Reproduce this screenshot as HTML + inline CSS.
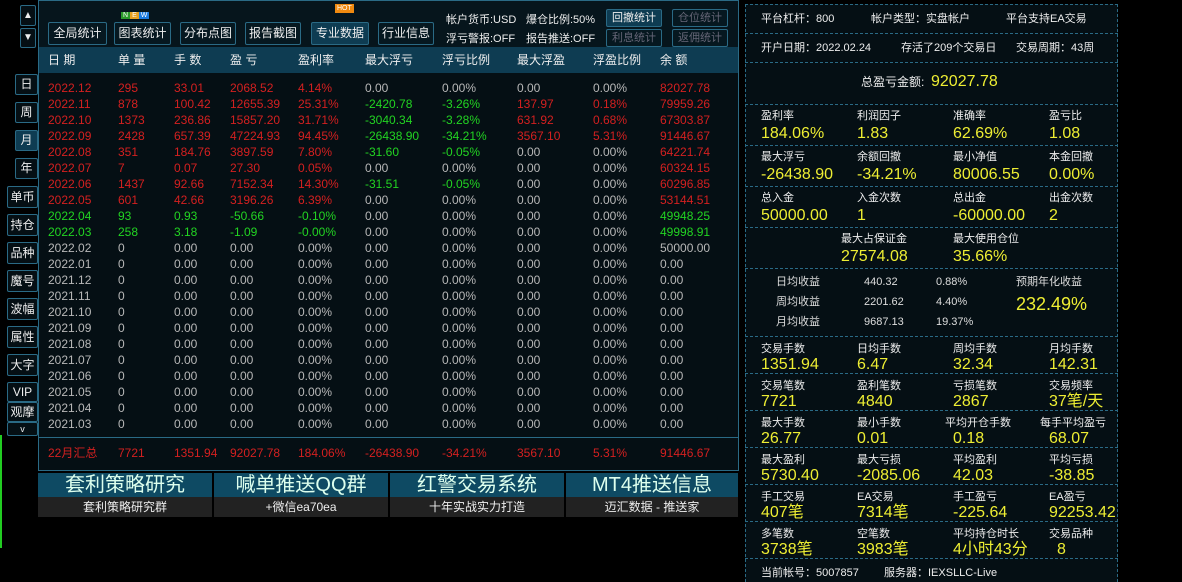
<!DOCTYPE html><html><head><meta charset="utf-8"><style>
*{margin:0;padding:0;box-sizing:border-box}
body{width:1182px;height:582px;background:#000;position:relative;overflow:hidden;font-family:"Liberation Sans","Noto Sans CJK SC",sans-serif;color:#ddd}
.a{position:absolute;white-space:nowrap}
.btn{position:absolute;border:1px solid #2a6a85;background:#061820;color:#eee;font-size:12px;text-align:center;border-radius:2px;white-space:nowrap}
.sb{position:absolute;border:1px solid #2a6a85;background:#050f14;color:#eee;font-size:12px;text-align:center;border-radius:2px;white-space:nowrap}
.row{position:absolute;left:0;width:740px;height:16px;font-size:12px;line-height:16px;white-space:nowrap}
.row span{position:absolute;top:0;white-space:nowrap}
.r{color:#d42020}.g{color:#22d422}.z{color:#b8b8b8}
.c1{left:48px}.c2{left:118px}.c3{left:174px}.c4{left:230px}.c5{left:298px}.c6{left:365px}.c7{left:442px}.c8{left:517px}.c9{left:593px}.c10{left:660px}
.rp{position:absolute;left:745px;width:373px;border-bottom:1px dashed #2a6a85}
.lb{position:absolute;font-size:11px;line-height:14px;color:#eee;white-space:nowrap}
.vl{position:absolute;font-size:16px;line-height:19px;height:19px;color:#eeee33;white-space:nowrap}
.sm{position:absolute;font-size:11px;line-height:14px;color:#ddd;white-space:nowrap}
</style></head><body>
<div class="sb" style="left:20px;top:5px;width:16px;height:21px;font-size:10px;line-height:19px">▲</div>
<div class="sb" style="left:20px;top:28px;width:16px;height:20px;font-size:10px;line-height:18px">▼</div>
<div class="sb" style="left:15px;top:74px;width:23px;height:21px;line-height:19px">日</div>
<div class="sb" style="left:15px;top:102px;width:23px;height:21px;line-height:19px">周</div>
<div class="sb" style="left:15px;top:130px;width:23px;height:21px;line-height:19px;background:#0e3c52">月</div>
<div class="sb" style="left:15px;top:158px;width:23px;height:21px;line-height:19px">年</div>
<div class="sb" style="left:7px;top:186px;width:31px;height:22px;line-height:20px">单币</div>
<div class="sb" style="left:7px;top:214px;width:31px;height:22px;line-height:20px">持仓</div>
<div class="sb" style="left:7px;top:242px;width:31px;height:22px;line-height:20px">品种</div>
<div class="sb" style="left:7px;top:270px;width:31px;height:22px;line-height:20px">魔号</div>
<div class="sb" style="left:7px;top:298px;width:31px;height:22px;line-height:20px">波幅</div>
<div class="sb" style="left:7px;top:326px;width:31px;height:22px;line-height:20px">属性</div>
<div class="sb" style="left:7px;top:354px;width:31px;height:22px;line-height:20px">大字</div>
<div class="sb" style="left:7px;top:382px;width:31px;height:20px;line-height:18px">VIP</div>
<div class="sb" style="left:7px;top:402px;width:31px;height:20px;line-height:18px">观摩</div>
<div class="sb" style="left:7px;top:422px;width:31px;height:14px;line-height:12px;font-size:9px">v</div>
<div class="a" style="left:0;top:435px;width:2px;height:113px;background:#22cc22"></div>
<div class="a" style="left:38px;top:0;width:701px;height:471px;border:1px solid #2a6a85;background:#050f14"></div>
<div class="a" style="left:39px;top:1px;width:699px;height:46px;background:#06151c"></div>
<div class="btn" style="left:48px;top:22px;width:59px;height:23px;line-height:21px">全局统计</div>
<div class="btn" style="left:114px;top:22px;width:57px;height:23px;line-height:21px">图表统计</div>
<div class="a" style="left:121px;top:12px;font-size:7px;line-height:8px"><span style="background:#2a9a2a;color:#fff;padding:0 2px">N</span><span style="background:#e8a020;color:#fff;padding:0 2px">E</span><span style="background:#1a7ae0;color:#fff;padding:0 2px">W</span></div>
<div class="btn" style="left:180px;top:22px;width:56px;height:23px;line-height:21px">分布点图</div>
<div class="btn" style="left:245px;top:22px;width:56px;height:23px;line-height:21px">报告截图</div>
<div class="btn" style="left:311px;top:22px;width:58px;height:23px;line-height:21px;background:#0e3c52">专业数据</div>
<div class="a" style="left:335px;top:4px;background:#f08a10;color:#fff;font-size:7px;padding:0 2px;line-height:9px">HOT</div>
<div class="btn" style="left:378px;top:22px;width:56px;height:23px;line-height:21px">行业信息</div>
<div class="a" style="left:446px;top:11px;font-size:11px;color:#eee">帐户货币:USD</div>
<div class="a" style="left:526px;top:11px;font-size:11px;color:#eee">爆仓比例:50%</div>
<div class="a" style="left:446px;top:30px;font-size:11px;color:#eee">浮亏警报:OFF</div>
<div class="a" style="left:526px;top:30px;font-size:11px;color:#eee">报告推送:OFF</div>
<div class="btn" style="left:606px;top:9px;width:56px;height:18px;line-height:16px;font-size:11px;background:#0e3c52">回撤统计</div>
<div class="btn" style="left:672px;top:9px;width:56px;height:18px;line-height:16px;font-size:11px;color:#667">仓位统计</div>
<div class="btn" style="left:606px;top:29px;width:56px;height:18px;line-height:16px;font-size:11px;color:#667">利息统计</div>
<div class="btn" style="left:672px;top:29px;width:56px;height:18px;line-height:16px;font-size:11px;color:#667">返佣统计</div>
<div class="a" style="left:39px;top:47px;width:699px;height:26px;background:#0e3c52"></div>
<div class="row" style="top:52px;color:#eee"><span class="c1">日 期</span><span class="c2">单 量</span><span class="c3">手 数</span><span class="c4">盈 亏</span><span class="c5">盈利率</span><span class="c6">最大浮亏</span><span class="c7">浮亏比例</span><span class="c8">最大浮盈</span><span class="c9">浮盈比例</span><span class="c10">余 额</span></div>

<div class="row r" style="top:80px"><span class="c1">2022.12</span><span class="c2">295</span><span class="c3">33.01</span><span class="c4">2068.52</span><span class="c5">4.14%</span><span class="c6 z">0.00</span><span class="c7 z">0.00%</span><span class="c8 z">0.00</span><span class="c9 z">0.00%</span><span class="c10">82027.78</span></div>
<div class="row r" style="top:96px"><span class="c1">2022.11</span><span class="c2">878</span><span class="c3">100.42</span><span class="c4">12655.39</span><span class="c5">25.31%</span><span class="c6 g">-2420.78</span><span class="c7 g">-3.26%</span><span class="c8">137.97</span><span class="c9">0.18%</span><span class="c10">79959.26</span></div>
<div class="row r" style="top:112px"><span class="c1">2022.10</span><span class="c2">1373</span><span class="c3">236.86</span><span class="c4">15857.20</span><span class="c5">31.71%</span><span class="c6 g">-3040.34</span><span class="c7 g">-3.28%</span><span class="c8">631.92</span><span class="c9">0.68%</span><span class="c10">67303.87</span></div>
<div class="row r" style="top:128px"><span class="c1">2022.09</span><span class="c2">2428</span><span class="c3">657.39</span><span class="c4">47224.93</span><span class="c5">94.45%</span><span class="c6 g">-26438.90</span><span class="c7 g">-34.21%</span><span class="c8">3567.10</span><span class="c9">5.31%</span><span class="c10">91446.67</span></div>
<div class="row r" style="top:144px"><span class="c1">2022.08</span><span class="c2">351</span><span class="c3">184.76</span><span class="c4">3897.59</span><span class="c5">7.80%</span><span class="c6 g">-31.60</span><span class="c7 g">-0.05%</span><span class="c8 z">0.00</span><span class="c9 z">0.00%</span><span class="c10">64221.74</span></div>
<div class="row r" style="top:160px"><span class="c1">2022.07</span><span class="c2">7</span><span class="c3">0.07</span><span class="c4">27.30</span><span class="c5">0.05%</span><span class="c6 z">0.00</span><span class="c7 z">0.00%</span><span class="c8 z">0.00</span><span class="c9 z">0.00%</span><span class="c10">60324.15</span></div>
<div class="row r" style="top:176px"><span class="c1">2022.06</span><span class="c2">1437</span><span class="c3">92.66</span><span class="c4">7152.34</span><span class="c5">14.30%</span><span class="c6 g">-31.51</span><span class="c7 g">-0.05%</span><span class="c8 z">0.00</span><span class="c9 z">0.00%</span><span class="c10">60296.85</span></div>
<div class="row r" style="top:192px"><span class="c1">2022.05</span><span class="c2">601</span><span class="c3">42.66</span><span class="c4">3196.26</span><span class="c5">6.39%</span><span class="c6 z">0.00</span><span class="c7 z">0.00%</span><span class="c8 z">0.00</span><span class="c9 z">0.00%</span><span class="c10">53144.51</span></div>
<div class="row g" style="top:208px"><span class="c1">2022.04</span><span class="c2">93</span><span class="c3">0.93</span><span class="c4">-50.66</span><span class="c5">-0.10%</span><span class="c6 z">0.00</span><span class="c7 z">0.00%</span><span class="c8 z">0.00</span><span class="c9 z">0.00%</span><span class="c10">49948.25</span></div>
<div class="row g" style="top:224px"><span class="c1">2022.03</span><span class="c2">258</span><span class="c3">3.18</span><span class="c4">-1.09</span><span class="c5">-0.00%</span><span class="c6 z">0.00</span><span class="c7 z">0.00%</span><span class="c8 z">0.00</span><span class="c9 z">0.00%</span><span class="c10">49998.91</span></div>
<div class="row z" style="top:240px"><span class="c1">2022.02</span><span class="c2">0</span><span class="c3">0.00</span><span class="c4">0.00</span><span class="c5">0.00%</span><span class="c6">0.00</span><span class="c7">0.00%</span><span class="c8">0.00</span><span class="c9">0.00%</span><span class="c10">50000.00</span></div>
<div class="row z" style="top:256px"><span class="c1">2022.01</span><span class="c2">0</span><span class="c3">0.00</span><span class="c4">0.00</span><span class="c5">0.00%</span><span class="c6">0.00</span><span class="c7">0.00%</span><span class="c8">0.00</span><span class="c9">0.00%</span><span class="c10">0.00</span></div>
<div class="row z" style="top:272px"><span class="c1">2021.12</span><span class="c2">0</span><span class="c3">0.00</span><span class="c4">0.00</span><span class="c5">0.00%</span><span class="c6">0.00</span><span class="c7">0.00%</span><span class="c8">0.00</span><span class="c9">0.00%</span><span class="c10">0.00</span></div>
<div class="row z" style="top:288px"><span class="c1">2021.11</span><span class="c2">0</span><span class="c3">0.00</span><span class="c4">0.00</span><span class="c5">0.00%</span><span class="c6">0.00</span><span class="c7">0.00%</span><span class="c8">0.00</span><span class="c9">0.00%</span><span class="c10">0.00</span></div>
<div class="row z" style="top:304px"><span class="c1">2021.10</span><span class="c2">0</span><span class="c3">0.00</span><span class="c4">0.00</span><span class="c5">0.00%</span><span class="c6">0.00</span><span class="c7">0.00%</span><span class="c8">0.00</span><span class="c9">0.00%</span><span class="c10">0.00</span></div>
<div class="row z" style="top:320px"><span class="c1">2021.09</span><span class="c2">0</span><span class="c3">0.00</span><span class="c4">0.00</span><span class="c5">0.00%</span><span class="c6">0.00</span><span class="c7">0.00%</span><span class="c8">0.00</span><span class="c9">0.00%</span><span class="c10">0.00</span></div>
<div class="row z" style="top:336px"><span class="c1">2021.08</span><span class="c2">0</span><span class="c3">0.00</span><span class="c4">0.00</span><span class="c5">0.00%</span><span class="c6">0.00</span><span class="c7">0.00%</span><span class="c8">0.00</span><span class="c9">0.00%</span><span class="c10">0.00</span></div>
<div class="row z" style="top:352px"><span class="c1">2021.07</span><span class="c2">0</span><span class="c3">0.00</span><span class="c4">0.00</span><span class="c5">0.00%</span><span class="c6">0.00</span><span class="c7">0.00%</span><span class="c8">0.00</span><span class="c9">0.00%</span><span class="c10">0.00</span></div>
<div class="row z" style="top:368px"><span class="c1">2021.06</span><span class="c2">0</span><span class="c3">0.00</span><span class="c4">0.00</span><span class="c5">0.00%</span><span class="c6">0.00</span><span class="c7">0.00%</span><span class="c8">0.00</span><span class="c9">0.00%</span><span class="c10">0.00</span></div>
<div class="row z" style="top:384px"><span class="c1">2021.05</span><span class="c2">0</span><span class="c3">0.00</span><span class="c4">0.00</span><span class="c5">0.00%</span><span class="c6">0.00</span><span class="c7">0.00%</span><span class="c8">0.00</span><span class="c9">0.00%</span><span class="c10">0.00</span></div>
<div class="row z" style="top:400px"><span class="c1">2021.04</span><span class="c2">0</span><span class="c3">0.00</span><span class="c4">0.00</span><span class="c5">0.00%</span><span class="c6">0.00</span><span class="c7">0.00%</span><span class="c8">0.00</span><span class="c9">0.00%</span><span class="c10">0.00</span></div>
<div class="row z" style="top:416px"><span class="c1">2021.03</span><span class="c2">0</span><span class="c3">0.00</span><span class="c4">0.00</span><span class="c5">0.00%</span><span class="c6">0.00</span><span class="c7">0.00%</span><span class="c8">0.00</span><span class="c9">0.00%</span><span class="c10">0.00</span></div>
<div class="a" style="left:38px;top:437px;width:701px;height:1px;background:#2a6a85"></div>
<div class="row r" style="top:445px"><span class="c1">22月汇总</span><span class="c2">7721</span><span class="c3">1351.94</span><span class="c4">92027.78</span><span class="c5">184.06%</span><span class="c6">-26438.90</span><span class="c7">-34.21%</span><span class="c8">3567.10</span><span class="c9">5.31%</span><span class="c10">91446.67</span></div>
<div class="a" style="left:38px;top:473px;width:700px;height:44px">
<div class="a" style="left:0;top:0;width:174px;height:24px;background:#0e4a63;color:#dfe;font-size:20px;text-align:center;line-height:24px">套利策略研究</div>
<div class="a" style="left:0;top:24px;width:174px;height:20px;background:#222;color:#eee;font-size:12px;text-align:center;line-height:20px">套利策略研究群</div>
<div class="a" style="left:176px;top:0;width:174px;height:24px;background:#0e4a63;color:#dfe;font-size:20px;text-align:center;line-height:24px">喊单推送QQ群</div>
<div class="a" style="left:176px;top:24px;width:174px;height:20px;background:#222;color:#eee;font-size:12px;text-align:center;line-height:20px">+微信ea70ea</div>
<div class="a" style="left:352px;top:0;width:174px;height:24px;background:#0e4a63;color:#dfe;font-size:20px;text-align:center;line-height:24px">红警交易系统</div>
<div class="a" style="left:352px;top:24px;width:174px;height:20px;background:#222;color:#eee;font-size:12px;text-align:center;line-height:20px">十年实战实力打造</div>
<div class="a" style="left:528px;top:0;width:172px;height:24px;background:#0e4a63;color:#dfe;font-size:20px;text-align:center;line-height:24px">MT4推送信息</div>
<div class="a" style="left:528px;top:24px;width:172px;height:20px;background:#222;color:#eee;font-size:12px;text-align:center;line-height:20px">迈汇数据 - 推送家</div>
</div>
<div class="a" style="left:745px;top:4px;width:373px;height:578px;background:#050f14;border-left:1px dashed #2a6a85;border-right:1px dashed #2a6a85;border-top:1px dashed #2a6a85"></div>
<div class="rp" style="top:4px;height:30px"></div>
<div class="rp" style="top:34px;height:29px"></div>
<div class="rp" style="top:63px;height:42px"></div>
<div class="rp" style="top:105px;height:41px"></div>
<div class="rp" style="top:146px;height:41px"></div>
<div class="rp" style="top:187px;height:41px"></div>
<div class="rp" style="top:228px;height:41px"></div>
<div class="rp" style="top:269px;height:68px"></div>
<div class="rp" style="top:337px;height:37px"></div>
<div class="rp" style="top:374px;height:37px"></div>
<div class="rp" style="top:411px;height:37px"></div>
<div class="rp" style="top:448px;height:37px"></div>
<div class="rp" style="top:485px;height:37px"></div>
<div class="rp" style="top:522px;height:37px"></div>
<div class="lb" style="left:761px;top:12px">平台杠杆：800</div>
<div class="lb" style="left:871px;top:12px">帐户类型：实盘帐户</div>
<div class="lb" style="left:1006px;top:12px">平台支持EA交易</div>
<div class="lb" style="left:761px;top:41px">开户日期：2022.02.24</div>
<div class="lb" style="left:901px;top:41px">存活了209个交易日</div>
<div class="lb" style="left:1016px;top:41px">交易周期：43周</div>
<div class="lb" style="left:861px;top:75px;font-size:12px">总盈亏金额:</div>
<div class="vl" style="left:931px;top:72px">92027.78</div>

<div class="lb" style="left:761px;top:109px">盈利率</div><div class="vl" style="left:761px;top:124px">184.06%</div>
<div class="lb" style="left:857px;top:109px">利润因子</div><div class="vl" style="left:857px;top:124px">1.83</div>
<div class="lb" style="left:953px;top:109px">准确率</div><div class="vl" style="left:953px;top:124px">62.69%</div>
<div class="lb" style="left:1049px;top:109px">盈亏比</div><div class="vl" style="left:1049px;top:124px">1.08</div>

<div class="lb" style="left:761px;top:150px">最大浮亏</div><div class="vl" style="left:761px;top:165px">-26438.90</div>
<div class="lb" style="left:857px;top:150px">余额回撤</div><div class="vl" style="left:857px;top:165px">-34.21%</div>
<div class="lb" style="left:953px;top:150px">最小净值</div><div class="vl" style="left:953px;top:165px">80006.55</div>
<div class="lb" style="left:1049px;top:150px">本金回撤</div><div class="vl" style="left:1049px;top:165px">0.00%</div>

<div class="lb" style="left:761px;top:191px">总入金</div><div class="vl" style="left:761px;top:206px">50000.00</div>
<div class="lb" style="left:857px;top:191px">入金次数</div><div class="vl" style="left:857px;top:206px">1</div>
<div class="lb" style="left:953px;top:191px">总出金</div><div class="vl" style="left:953px;top:206px">-60000.00</div>
<div class="lb" style="left:1049px;top:191px">出金次数</div><div class="vl" style="left:1049px;top:206px">2</div>

<div class="lb" style="left:841px;top:232px">最大占保证金</div><div class="vl" style="left:841px;top:247px">27574.08</div>
<div class="lb" style="left:953px;top:232px">最大使用仓位</div><div class="vl" style="left:953px;top:247px">35.66%</div>

<div class="sm" style="left:776px;top:275px">日均收益</div><div class="sm" style="left:864px;top:275px">440.32</div><div class="sm" style="left:936px;top:275px">0.88%</div>
<div class="sm" style="left:776px;top:295px">周均收益</div><div class="sm" style="left:864px;top:295px">2201.62</div><div class="sm" style="left:936px;top:295px">4.40%</div>
<div class="sm" style="left:776px;top:315px">月均收益</div><div class="sm" style="left:864px;top:315px">9687.13</div><div class="sm" style="left:936px;top:315px">19.37%</div>
<div class="sm" style="left:1016px;top:275px">预期年化收益</div>
<div class="vl" style="left:1016px;top:293px;font-size:18px;line-height:22px;height:22px">232.49%</div>

<div class="lb" style="left:761px;top:342px">交易手数</div><div class="vl" style="left:761px;top:355px">1351.94</div>
<div class="lb" style="left:857px;top:342px">日均手数</div><div class="vl" style="left:857px;top:355px">6.47</div>
<div class="lb" style="left:953px;top:342px">周均手数</div><div class="vl" style="left:953px;top:355px">32.34</div>
<div class="lb" style="left:1049px;top:342px">月均手数</div><div class="vl" style="left:1049px;top:355px">142.31</div>

<div class="lb" style="left:761px;top:379px">交易笔数</div><div class="vl" style="left:761px;top:392px">7721</div>
<div class="lb" style="left:857px;top:379px">盈利笔数</div><div class="vl" style="left:857px;top:392px">4840</div>
<div class="lb" style="left:953px;top:379px">亏损笔数</div><div class="vl" style="left:953px;top:392px">2867</div>
<div class="lb" style="left:1049px;top:379px">交易频率</div><div class="vl" style="left:1049px;top:392px">37笔/天</div>

<div class="lb" style="left:761px;top:416px">最大手数</div><div class="vl" style="left:761px;top:429px">26.77</div>
<div class="lb" style="left:857px;top:416px">最小手数</div><div class="vl" style="left:857px;top:429px">0.01</div>
<div class="lb" style="left:945px;top:416px">平均开仓手数</div><div class="vl" style="left:953px;top:429px">0.18</div>
<div class="lb" style="left:1040px;top:416px">每手平均盈亏</div><div class="vl" style="left:1049px;top:429px">68.07</div>

<div class="lb" style="left:761px;top:453px">最大盈利</div><div class="vl" style="left:761px;top:466px">5730.40</div>
<div class="lb" style="left:857px;top:453px">最大亏损</div><div class="vl" style="left:857px;top:466px">-2085.06</div>
<div class="lb" style="left:953px;top:453px">平均盈利</div><div class="vl" style="left:953px;top:466px">42.03</div>
<div class="lb" style="left:1049px;top:453px">平均亏损</div><div class="vl" style="left:1049px;top:466px">-38.85</div>

<div class="lb" style="left:761px;top:490px">手工交易</div><div class="vl" style="left:761px;top:503px">407笔</div>
<div class="lb" style="left:857px;top:490px">EA交易</div><div class="vl" style="left:857px;top:503px">7314笔</div>
<div class="lb" style="left:953px;top:490px">手工盈亏</div><div class="vl" style="left:953px;top:503px">-225.64</div>
<div class="lb" style="left:1049px;top:490px">EA盈亏</div><div class="vl" style="left:1049px;top:503px">92253.42</div>

<div class="lb" style="left:761px;top:527px">多笔数</div><div class="vl" style="left:761px;top:540px">3738笔</div>
<div class="lb" style="left:857px;top:527px">空笔数</div><div class="vl" style="left:857px;top:540px">3983笔</div>
<div class="lb" style="left:953px;top:527px">平均持仓时长</div><div class="vl" style="left:953px;top:540px">4小时43分</div>
<div class="lb" style="left:1049px;top:527px">交易品种</div><div class="vl" style="left:1057px;top:540px">8</div>

<div class="lb" style="left:761px;top:566px">当前帐号：5007857</div>
<div class="lb" style="left:884px;top:566px">服务器：IEXSLLC-Live</div>
</body></html>
